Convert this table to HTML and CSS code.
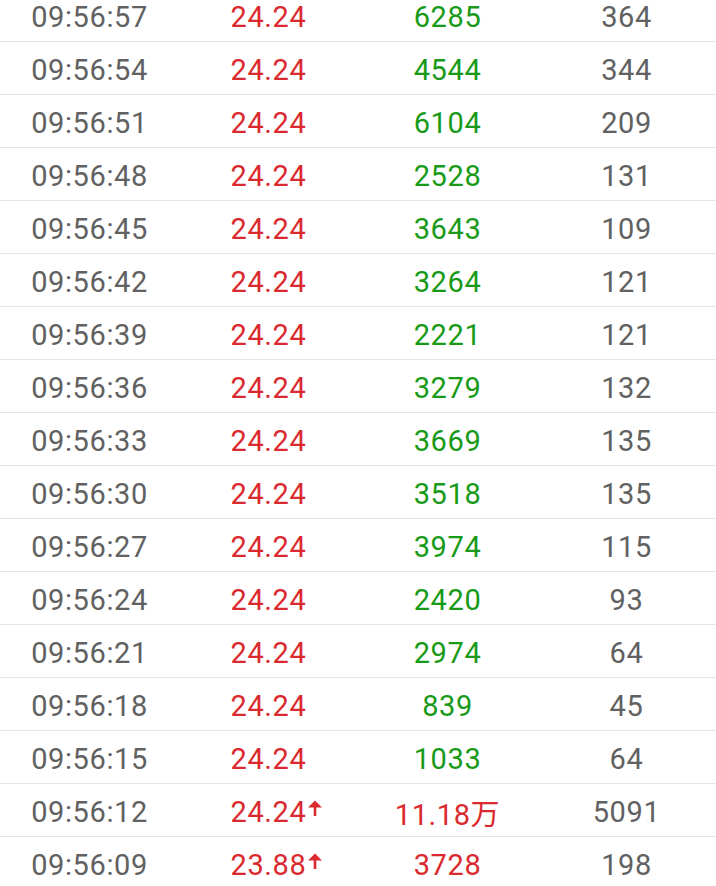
FILE: index.html
```html
<!DOCTYPE html>
<html lang="zh-CN">
<head>
  <meta charset="UTF-8">
  <title>逐笔成交</title>
  <link rel="stylesheet" href="styles.css">
</head>
<body>

<div id="ticks">
  <div class="tick-row"><span class="time">09:56:57</span><span class="price up">24.24</span><span class="vol down">6285</span><span class="count">364</span></div>
  <div class="tick-row"><span class="time">09:56:54</span><span class="price up">24.24</span><span class="vol down">4544</span><span class="count">344</span></div>
  <div class="tick-row"><span class="time">09:56:51</span><span class="price up">24.24</span><span class="vol down">6104</span><span class="count">209</span></div>
  <div class="tick-row"><span class="time">09:56:48</span><span class="price up">24.24</span><span class="vol down">2528</span><span class="count">131</span></div>
  <div class="tick-row"><span class="time">09:56:45</span><span class="price up">24.24</span><span class="vol down">3643</span><span class="count">109</span></div>
  <div class="tick-row"><span class="time">09:56:42</span><span class="price up">24.24</span><span class="vol down">3264</span><span class="count">121</span></div>
  <div class="tick-row"><span class="time">09:56:39</span><span class="price up">24.24</span><span class="vol down">2221</span><span class="count">121</span></div>
  <div class="tick-row"><span class="time">09:56:36</span><span class="price up">24.24</span><span class="vol down">3279</span><span class="count">132</span></div>
  <div class="tick-row"><span class="time">09:56:33</span><span class="price up">24.24</span><span class="vol down">3669</span><span class="count">135</span></div>
  <div class="tick-row"><span class="time">09:56:30</span><span class="price up">24.24</span><span class="vol down">3518</span><span class="count">135</span></div>
  <div class="tick-row"><span class="time">09:56:27</span><span class="price up">24.24</span><span class="vol down">3974</span><span class="count">115</span></div>
  <div class="tick-row"><span class="time">09:56:24</span><span class="price up">24.24</span><span class="vol down">2420</span><span class="count">93</span></div>
  <div class="tick-row"><span class="time">09:56:21</span><span class="price up">24.24</span><span class="vol down">2974</span><span class="count">64</span></div>
  <div class="tick-row"><span class="time">09:56:18</span><span class="price up">24.24</span><span class="vol down">839</span><span class="count">45</span></div>
  <div class="tick-row"><span class="time">09:56:15</span><span class="price up">24.24</span><span class="vol down">1033</span><span class="count">64</span></div>
  <div class="tick-row"><span class="time">09:56:12</span><span class="price up"><span class="num">24.24<svg class="arrow" viewBox="0 0 16 16"><path d="M8 0.5 L15 7.5 L9.3 7.5 L9.3 16 L6.7 16 L6.7 7.5 L1 7.5 Z" fill="currentColor"/></svg></span></span><span class="vol up">11.18万</span><span class="count">5091</span></div>
  <div class="tick-row"><span class="time">09:56:09</span><span class="price up"><span class="num">23.88<svg class="arrow" viewBox="0 0 16 16"><path d="M8 0.5 L15 7.5 L9.3 7.5 L9.3 16 L6.7 16 L6.7 7.5 L1 7.5 Z" fill="currentColor"/></svg></span></span><span class="vol up">3728</span><span class="count">198</span></div>
</div>

</body>
</html>
```

FILE: styles.css
```css
body { margin: 0; padding: 0; background: white; font-family: Roboto, "Noto Sans CJK SC", sans-serif; overflow: hidden; }
#ticks {
  margin-top: -11px;
}
.tick-row {
  display: grid;
  grid-template-columns: repeat(4, 1fr);
  box-sizing: border-box;
  height: 53px;
  padding-top: 4px;
  align-items: center;
  border-bottom: 1px solid #e6e6e6;
  font-size: 29px;
  letter-spacing: 0.6px;
  color: #616161;
  text-align: center;
}
.up { color: #db2a2f; }
.down { color: #189a18; }
.num { position: relative; }
.arrow {
  position: absolute;
  left: 100%;
  top: 5px;
  margin-left: 1px;
  width: 16px;
  height: 16px;
}
```
